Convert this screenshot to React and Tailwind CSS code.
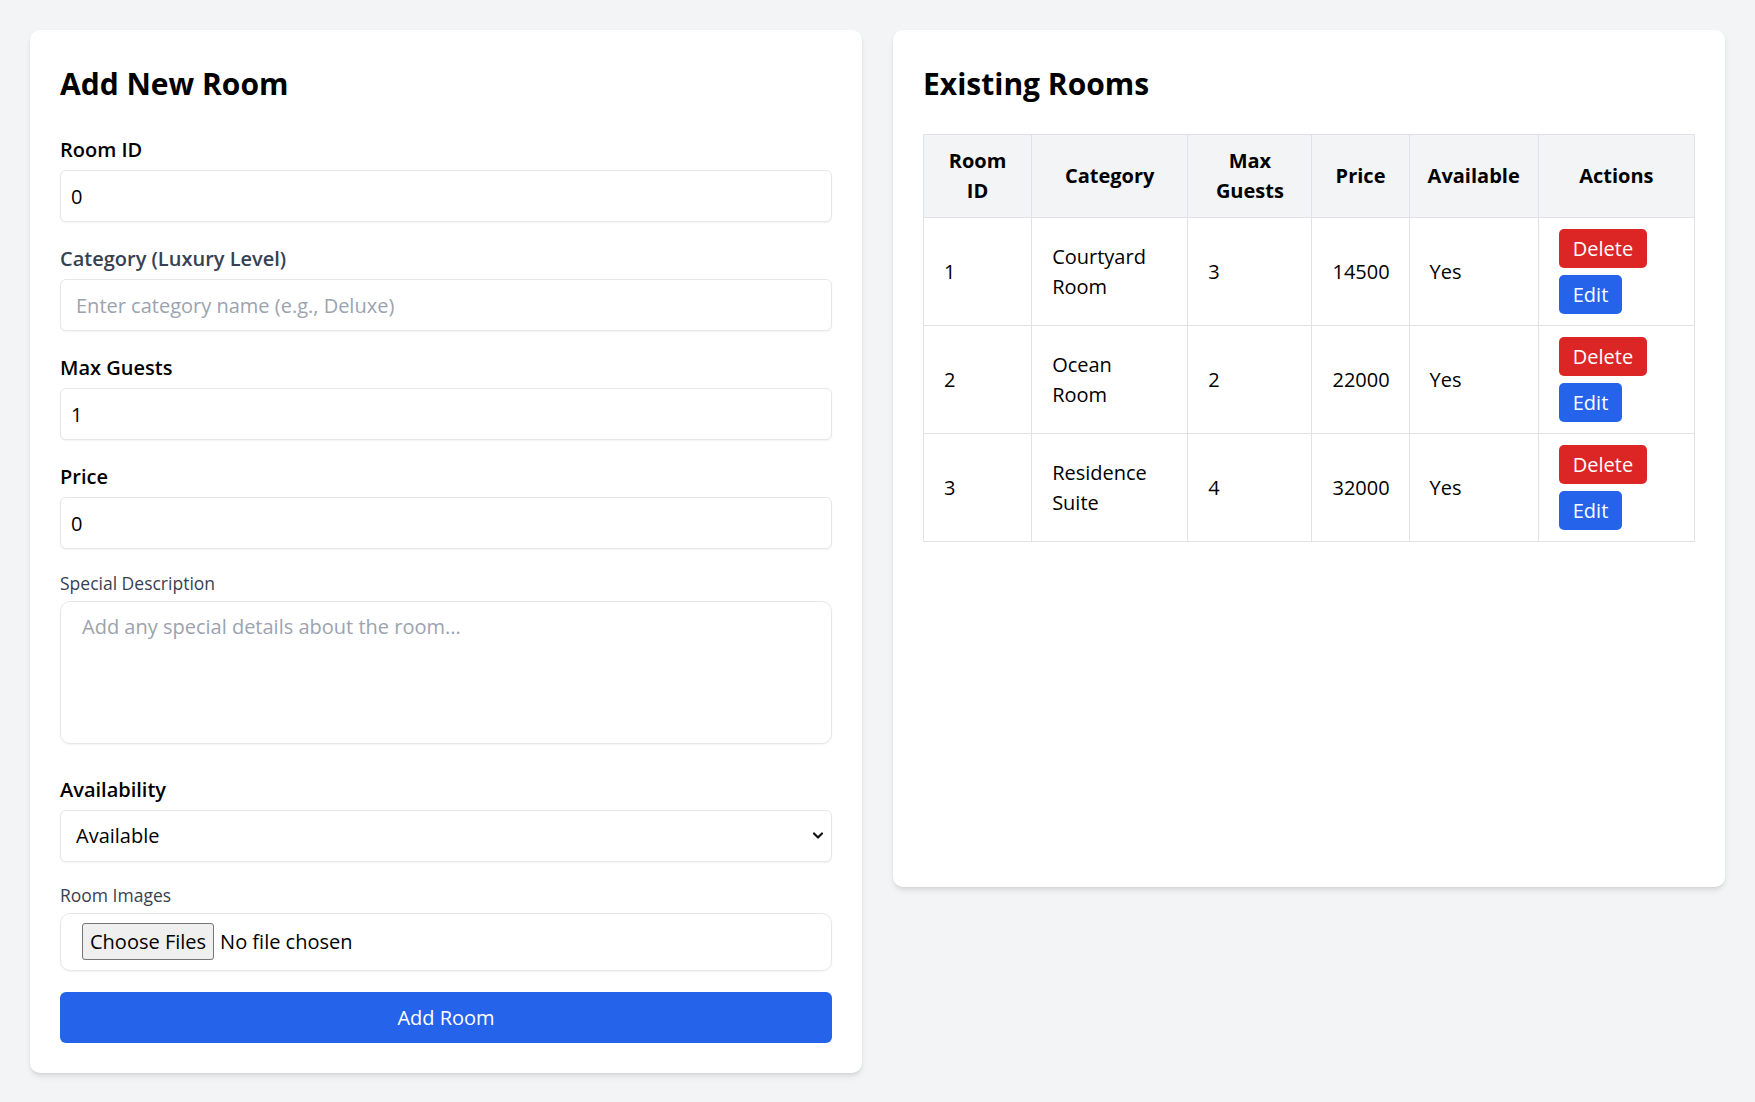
import { useState } from "react";

const rooms = [
  { id: 1, category: "Courtyard Room", maxGuests: 3, price: 14500, available: true },
  { id: 2, category: "Ocean Room", maxGuests: 2, price: 22000, available: true },
  { id: 3, category: "Residence Suite", maxGuests: 4, price: 32000, available: true },
];

const inputBase =
  "block w-full h-[52px] border border-[#e5e7eb] rounded-[6px] bg-white shadow-xs text-[20px] leading-[30px] text-black outline-none placeholder:text-[#9ca3af]";

const App = () => {
  const [form, setForm] = useState({
    roomId: 0,
    category: "",
    maxGuests: 1,
    price: 0,
    description: "",
    available: "true",
  });

  const update = (key) => (e) => setForm({ ...form, [key]: e.target.value });

  return (
    <div
      className="min-h-screen bg-[#f3f4f6] p-[30px] text-[20px] leading-[30px] text-black"
      style={{ fontFamily: '"Open Sans", "Noto Sans", sans-serif' }}
    >
      <div className="grid grid-cols-2 gap-[31px] items-start">
        {/* ================= ADD NEW ROOM ================= */}
        <div className="bg-white rounded-[10px] shadow-md px-[30px] pt-[34px] pb-[30px]">
          <h2 className="text-[30px] leading-[40px] font-bold mb-[31px]">Add New Room</h2>

          <div className="mb-[22px]">
            <label className="block font-semibold mb-[5px]">Room ID</label>
            <input
              type="number"
              value={form.roomId}
              onChange={update("roomId")}
              className={`${inputBase} px-[10px]`}
            />
          </div>

          <div className="mb-[22px]">
            <label className="block font-semibold text-[#374151] mb-[5px]">
              Category (Luxury Level)
            </label>
            <input
              type="text"
              placeholder="Enter category name (e.g., Deluxe)"
              value={form.category}
              onChange={update("category")}
              className={`${inputBase} px-[15px]`}
            />
          </div>

          <div className="mb-[22px]">
            <label className="block font-semibold mb-[5px]">Max Guests</label>
            <input
              type="number"
              value={form.maxGuests}
              onChange={update("maxGuests")}
              className={`${inputBase} px-[10px]`}
            />
          </div>

          <div className="mb-[22px]">
            <label className="block font-semibold mb-[5px]">Price</label>
            <input
              type="number"
              value={form.price}
              onChange={update("price")}
              className={`${inputBase} px-[10px]`}
            />
          </div>

          <div className="mb-[31px]">
            <label className="block text-[17.5px] leading-[25px] font-medium text-[#374151] mb-[5px]">
              Special Description
            </label>
            <textarea
              rows={4}
              placeholder="Add any special details about the room..."
              value={form.description}
              onChange={update("description")}
              className="block w-full h-[143px] resize-none border border-[#e5e7eb] rounded-[10px] shadow-xs px-[21px] py-[10px] text-[20px] leading-[30px] outline-none placeholder:text-[#9ca3af]"
            />
          </div>

          <div className="mb-[21px]">
            <label className="block font-semibold mb-[5px]">Availability</label>
            <div className="relative">
              <select
                value={form.available}
                onChange={update("available")}
                className={`${inputBase} appearance-none px-[15px]`}
              >
                <option value="true">Available</option>
                <option value="false">Not Available</option>
              </select>
              <svg
                className="absolute right-[8px] top-[21px] pointer-events-none"
                width="12"
                height="9"
                viewBox="0 0 12 9"
                fill="none"
              >
                <path d="M2 2.5 L6 6.5 L10 2.5" stroke="#111" strokeWidth="2.2" strokeLinecap="round" strokeLinejoin="round" />
              </svg>
            </div>
          </div>

          <div className="mb-[21px]">
            <label className="block text-[17.5px] leading-[25px] font-medium text-[#374151] mb-[5px]">
              Room Images
            </label>
            <input
              type="file"
              multiple
              className="block w-full h-[58px] border border-[#e5e7eb] rounded-[10px] shadow-xs px-[21px] py-[9px] text-[20px] leading-[30px] text-black file:mr-[6px] file:px-[7px] file:py-[1px] file:h-[37px] file:bg-[#efefef] file:border file:border-solid file:border-[#767676] file:rounded-[3px] file:text-[20px] file:text-black"
            />
          </div>

          <button className="block w-full h-[51px] bg-[#2563eb] text-white rounded-[6px] text-[20px] leading-[30px]">
            Add Room
          </button>
        </div>

        {/* ================= EXISTING ROOMS ================= */}
        <div className="bg-white rounded-[10px] shadow-md px-[30px] pt-[34px] pb-[30px] min-h-[857px]">
          <h2 className="text-[30px] leading-[40px] font-bold mb-[30px]">Existing Rooms</h2>

          <table className="w-full table-fixed border-collapse border border-[#e0e2e6]">
            <colgroup>
              <col className="w-[108px]" />
              <col className="w-[156px]" />
              <col className="w-[124px]" />
              <col className="w-[97px]" />
              <col className="w-[129px]" />
              <col className="w-[156px]" />
            </colgroup>
            <thead>
              <tr className="bg-[#f3f4f6]">
                <th className="border border-[#e0e2e6] px-[10px] py-[11px] font-bold text-center">
                  Room<br />ID
                </th>
                <th className="border border-[#e0e2e6] px-[10px] py-[11px] font-bold text-center">Category</th>
                <th className="border border-[#e0e2e6] px-[10px] py-[11px] font-bold text-center">
                  Max<br />Guests
                </th>
                <th className="border border-[#e0e2e6] px-[10px] py-[11px] font-bold text-center">Price</th>
                <th className="border border-[#e0e2e6] px-[10px] py-[11px] font-bold text-center">Available</th>
                <th className="border border-[#e0e2e6] px-[10px] py-[11px] font-bold text-center">Actions</th>
              </tr>
            </thead>
            <tbody>
              {rooms.map((room) => (
                <tr key={room.id}>
                  <td className="border border-[#e0e2e6] px-[20px] py-[11px] align-middle">{room.id}</td>
                  <td className="border border-[#e0e2e6] px-[20px] py-[11px] align-middle">
                    {room.category.split(" ").map((w) => (
                      <div key={w}>{w}</div>
                    ))}
                  </td>
                  <td className="border border-[#e0e2e6] px-[20px] py-[11px] align-middle">{room.maxGuests}</td>
                  <td className="border border-[#e0e2e6] px-[20px] py-[11px] align-middle">{room.price}</td>
                  <td className="border border-[#e0e2e6] px-[20px] py-[11px] align-middle">
                    {room.available ? "Yes" : "No"}
                  </td>
                  <td className="border border-[#e0e2e6] px-[20px] py-[11px] align-middle">
                    <div className="flex flex-col items-start gap-[7px]">
                      <button className="h-[39px] px-[14px] bg-[#dc2626] text-white rounded-[5px]">Delete</button>
                      <button className="h-[39px] px-[14px] bg-[#2563eb] text-white rounded-[5px]">Edit</button>
                    </div>
                  </td>
                </tr>
              ))}
            </tbody>
          </table>
        </div>
      </div>
    </div>
  );
};

export default App;
